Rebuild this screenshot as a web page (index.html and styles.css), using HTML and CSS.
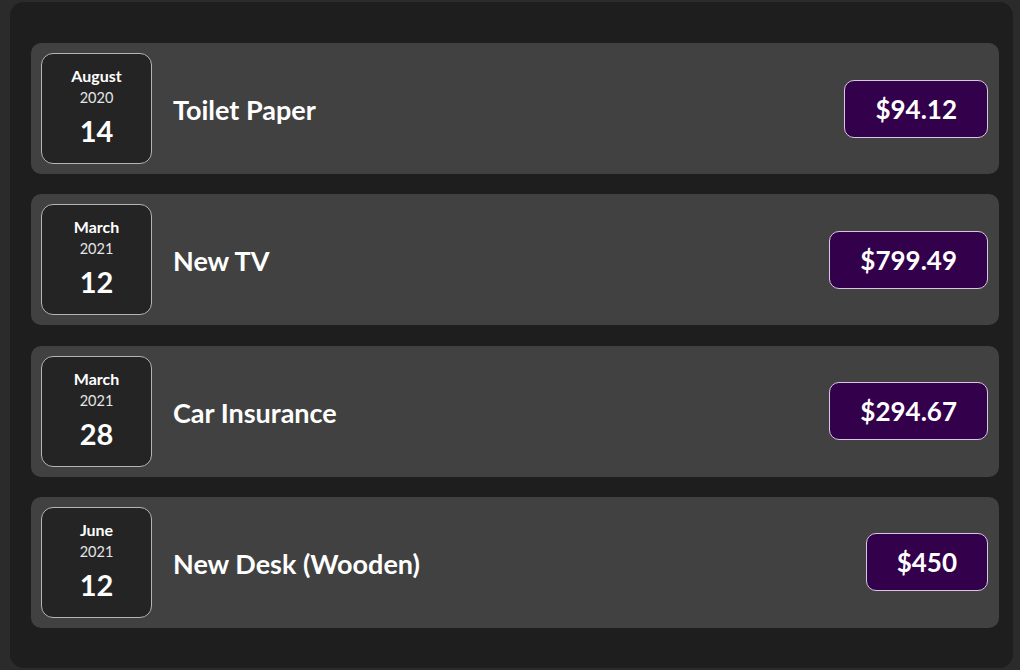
FILE: index.html
```html
<!DOCTYPE html>
<html>
<head>
<meta charset="utf-8">
<link rel="stylesheet" href="styles.css">
</head>
<body>
<div class="panel">
  <div class="expense">
    <div class="date"><div class="month">August</div><div class="year">2020</div><div class="day">14</div></div>
    <div class="title">Toilet Paper</div>
    <div class="price">$94.12</div>
  </div>
  <div class="expense">
    <div class="date"><div class="month">March</div><div class="year">2021</div><div class="day">12</div></div>
    <div class="title">New TV</div>
    <div class="price">$799.49</div>
  </div>
  <div class="expense">
    <div class="date"><div class="month">March</div><div class="year">2021</div><div class="day">28</div></div>
    <div class="title">Car Insurance</div>
    <div class="price">$294.67</div>
  </div>
  <div class="expense">
    <div class="date"><div class="month">June</div><div class="year">2021</div><div class="day">12</div></div>
    <div class="title">New Desk (Wooden)</div>
    <div class="price">$450</div>
  </div>
</div>
</body>
</html>
```
FILE: styles.css
```css
html, body {
  margin: 0;
  padding: 0;
  height: 100%;
  background: #2b2b2b;
  font-family: Lato, "Open Sans", sans-serif;
  color: #fff;
}
body {
  padding: 2px 7px 2px 10px;
  box-sizing: border-box;
}
.panel {
  background: #1e1e1e;
  border-radius: 14px;
  height: 666px;
  box-sizing: border-box;
  padding: 41px 14px 0 21px;
  display: flex;
  flex-direction: column;
  gap: 20.3px;
}
.expense {
  background: #414141;
  border-radius: 10px;
  height: 131px;
  flex-shrink: 0;
  box-sizing: border-box;
  padding: 10px 11px 10px 10px;
  display: flex;
  align-items: center;
  gap: 21px;
}
.date {
  width: 111px;
  height: 111px;
  box-sizing: border-box;
  border: 1.5px solid #b5b5b5;
  border-radius: 12px;
  background: #242424;
  display: flex;
  flex-direction: column;
  align-items: center;
  padding-top: 12px;
}
.month {
  font-size: 16px;
  font-weight: 700;
  line-height: 20px;
}
.year {
  font-size: 14.5px;
  line-height: 20px;
  margin-top: 2px;
  color: #e6e6e6;
}
.day {
  font-size: 29px;
  font-weight: 700;
  line-height: 34px;
  margin-top: 6px;
}
.title {
  flex: 1;
  font-size: 27px;
  font-weight: 700;
  padding-top: 2px;
}
.price {
  background: #33004b;
  border: 1.5px solid #d9c6e3;
  border-radius: 10px;
  height: 58px;
  box-sizing: border-box;
  padding: 0 30px;
  display: flex;
  align-items: center;
  font-size: 26px;
  font-weight: 700;
}
```
